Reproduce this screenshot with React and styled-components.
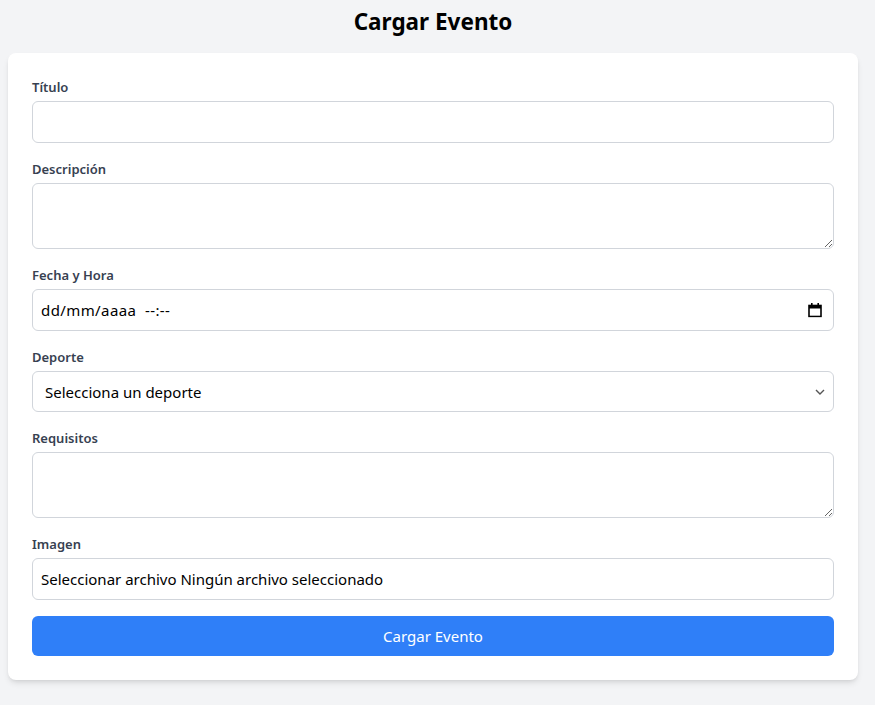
import React from "react";
import styled, { createGlobalStyle } from "styled-components";

const GlobalStyle = createGlobalStyle`
    * { box-sizing: border-box; }
    body {
        margin: 0;
        background: #f3f4f6;
        font-family: "Noto Sans", "Open Sans", sans-serif;
        color: #111827;
    }
`;

const Page = styled.div`
    width: 850px;
    margin: 0 0 0 8px;
    padding-top: 6px;
    padding-bottom: 24px;
`;

const Title = styled.h1`
    margin: 0 0 15px;
    text-align: center;
    font-size: 22.5px;
    line-height: 32px;
    font-weight: 700;
    color: #000;
`;

const Card = styled.form`
    background: #fff;
    border-radius: 8px;
    box-shadow: 0 4px 6px -1px rgba(0, 0, 0, 0.1), 0 2px 4px -2px rgba(0, 0, 0, 0.1);
    padding: 24px;
    display: flex;
    flex-direction: column;
    gap: 16px;
`;

const Field = styled.div`
    display: flex;
    flex-direction: column;
`;

const Label = styled.label`
    font-size: 13px;
    line-height: 20px;
    font-weight: 600;
    color: #374151;
    margin-bottom: 4px;
`;

const boxStyle = `
    width: 100%;
    border: 1px solid #d1d5db;
    border-radius: 6px;
    background: #fff;
    font-family: "Noto Sans", "Open Sans", sans-serif;
    font-size: 15px;
    line-height: 24px;
    color: #000;
    outline: none;
`;

const Input = styled.input`
    ${boxStyle}
    height: 42px;
    padding: 8px;
    letter-spacing: ${(p) => (p.$spaced ? "0.4px" : "normal")};
    &::placeholder {
        color: #000;
    }
`;

const TextArea = styled.textarea`
    ${boxStyle}
    height: 66px;
    padding: 8px;
    resize: vertical;
    display: block;
`;

const Wrap = styled.div`
    position: relative;
`;

const Select = styled.select`
    ${boxStyle}
    height: 41px;
    padding: 0 12px;
    appearance: none;
`;

const Icon = styled.span`
    position: absolute;
    top: 50%;
    right: ${(p) => p.$right}px;
    transform: translateY(-50%);
    display: flex;
    pointer-events: none;
`;

const FileBox = styled.label`
    ${boxStyle}
    display: block;
    height: 42px;
    padding: 8px;
    cursor: pointer;
    input {
        display: none;
    }
`;

const Submit = styled.button`
    height: 40px;
    border: none;
    border-radius: 6px;
    background: #2f7ff8;
    color: #fff;
    font-family: "Noto Sans", "Open Sans", sans-serif;
    font-size: 15px;
    cursor: pointer;
`;

const App = () => {
    return (
        <>
            <GlobalStyle />
            <Page>
                <Title>Cargar Evento</Title>
                <Card onSubmit={(e) => e.preventDefault()}>
                    <Field>
                        <Label>Título</Label>
                        <Input type="text" />
                    </Field>
                    <Field>
                        <Label>Descripción</Label>
                        <TextArea rows={2} />
                    </Field>
                    <Field>
                        <Label>Fecha y Hora</Label>
                        <Wrap>
                            <Input type="text" $spaced placeholder="dd/mm/aaaa  --:--" />
                            <Icon $right={12}>
                                <svg width="14" height="15" viewBox="0 0 14 15">
                                    <rect x="1" y="3" width="12" height="11" fill="none" stroke="#000" strokeWidth="1.6" />
                                    <rect x="1" y="3" width="12" height="3" fill="#000" />
                                    <rect x="3" y="0.5" width="1.6" height="3" fill="#000" />
                                    <rect x="9.4" y="0.5" width="1.6" height="3" fill="#000" />
                                </svg>
                            </Icon>
                        </Wrap>
                    </Field>
                    <Field>
                        <Label>Deporte</Label>
                        <Wrap>
                            <Select defaultValue="">
                                <option value="">Selecciona un deporte</option>
                                <option value="futbol">Fútbol</option>
                                <option value="basquet">Básquet</option>
                                <option value="tenis">Tenis</option>
                            </Select>
                            <Icon $right={9}>
                                <svg width="10" height="6" viewBox="0 0 10 6">
                                    <path d="M1 1l4 4 4-4" fill="none" stroke="#555" strokeWidth="1.4" />
                                </svg>
                            </Icon>
                        </Wrap>
                    </Field>
                    <Field>
                        <Label>Requisitos</Label>
                        <TextArea rows={2} />
                    </Field>
                    <Field>
                        <Label>Imagen</Label>
                        <FileBox>
                            Seleccionar archivo Ningún archivo seleccionado
                            <input type="file" accept="image/*" />
                        </FileBox>
                    </Field>
                    <Submit type="submit">Cargar Evento</Submit>
                </Card>
            </Page>
        </>
    );
};

export default App;
